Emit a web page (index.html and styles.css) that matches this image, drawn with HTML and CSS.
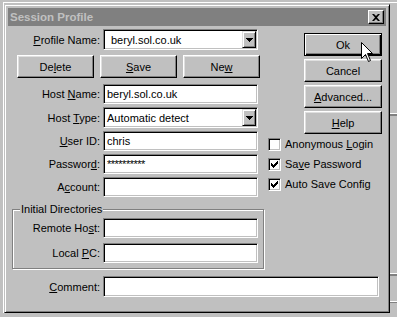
FILE: index.html
```html
<!DOCTYPE html>
<html lang="en">
<head>
    <meta charset="UTF-8">
    <title>Session Profile</title>
    <link rel="stylesheet" href="styles.css">
</head>
<body>
<div class="desk">
    <div class="dialog">
        <div class="titlebar">
            <span class="title">Session Profile</span>
            <button class="close">
                <svg width="8" height="7" viewBox="0 0 8 7"><path d="M0 0h2l2 2 2-2h2L5 3.5 8 7H6L4 5 2 7H0l3-3.5z"/></svg>
            </button>
        </div>
        <div class="content">
            <div class="upper">
                <div class="left">
                    <div class="row-grid">
                        <label class="lbl"><u>P</u>rofile Name:</label>
                        <div class="combo">
                            <span class="val val-profile">beryl.sol.co.uk</span>
                            <span class="drop"><svg width="7" height="4" viewBox="0 0 7 4"><path d="M0 0h7v1H6v1H5v1H4v1H3V3H2V2H1V1H0z"/></svg></span>
                        </div>
                    </div>
                    <div class="actions">
                        <button class="btn">De<u>l</u>ete</button>
                        <button class="btn"><u>S</u>ave</button>
                        <button class="btn">Ne<u>w</u></button>
                    </div>
                    <div class="row-grid fields">
                        <label class="lbl">Host <u>N</u>ame:</label>
                        <div class="edit">beryl.sol.co.uk</div>
                        <label class="lbl">Host <u>T</u>ype:</label>
                        <div class="combo">
                            <span class="val">Automatic detect</span>
                            <span class="drop"><svg width="7" height="4" viewBox="0 0 7 4"><path d="M0 0h7v1H6v1H5v1H4v1H3V3H2V2H1V1H0z"/></svg></span>
                        </div>
                        <label class="lbl"><u>U</u>ser ID:</label>
                        <div class="edit">chris</div>
                        <label class="lbl">Passwor<u>d</u>:</label>
                        <div class="edit pwd">**********</div>
                        <label class="lbl">A<u>c</u>count:</label>
                        <div class="edit"></div>
                    </div>
                    <fieldset class="group">
                        <legend>Initial Directories</legend>
                        <div class="row-grid group-grid">
                            <label class="lbl">Remote Ho<u>s</u>t:</label>
                            <div class="edit"></div>
                            <label class="lbl">Local <u>P</u>C:</label>
                            <div class="edit"></div>
                        </div>
                    </fieldset>
                </div>
                <div class="right">
                    <div class="side-btns">
                        <button class="btn btn-default">Ok</button>
                        <button class="btn">Cancel</button>
                        <button class="btn"><u>A</u>dvanced...</button>
                        <button class="btn"><u>H</u>elp</button>
                    </div>
                    <div class="checks">
                        <div class="check-row">
                            <span class="box"></span>
                            <span>Anonymous <u>L</u>ogin</span>
                        </div>
                        <div class="check-row">
                            <span class="box"><svg width="7" height="7" viewBox="0 0 7 7"><path d="M6 0h1v1H6zM5 1h2v1H5zM0 2h1v1H0zM4 2h3v1H4zM0 3h2v1H0zM3 3h3v1H3zM0 4h5v1H0zM1 5h3v1H1zM2 6h1v1H2z"/></svg></span>
                            <span>Sa<u>v</u>e Password</span>
                        </div>
                        <div class="check-row">
                            <span class="box"><svg width="7" height="7" viewBox="0 0 7 7"><path d="M6 0h1v1H6zM5 1h2v1H5zM0 2h1v1H0zM4 2h3v1H4zM0 3h2v1H0zM3 3h3v1H3zM0 4h5v1H0zM1 5h3v1H1zM2 6h1v1H2z"/></svg></span>
                            <span>Auto Save Config</span>
                        </div>
                    </div>
                </div>
            </div>
            <div class="comment-row">
                <label class="lbl"><u>C</u>omment:</label>
                <div class="edit"></div>
            </div>
        </div>
    </div>
    <div class="side"></div>
</div>
<svg class="cursor" width="13" height="20" viewBox="0 0 13 20">
    <path d="M0.5 0.5V16.5L4.5 12.5L7.5 19.5L9.5 18.5L6.5 11.5H11.5Z" fill="#fff" stroke="#000" stroke-width="1"/>
</svg>
</body>
</html>
```

FILE: styles.css
```css
body {
    margin: 0;
    background-color: #c0c0c0;
    font-family: "Liberation Sans", Arial, sans-serif;
    font-size: 11px;
    color: #000;
    overflow: hidden;
}

u {
    text-underline-offset: 1px;
}

button {
    font: inherit;
    color: inherit;
    padding: 0;
    margin: 0;
}

.desk {
    display: flex;
    margin: 2px 0 0 3px;
    padding-top: 1px;
    border-top: 1px solid #fff;
    border-left: 1px solid #fff;
}

.dialog {
    width: 386px;
    height: 309px;
    box-sizing: border-box;
    padding: 3px;
    border: 1px solid;
    border-color: #c0c0c0 #000 #000 #c0c0c0;
    box-shadow: inset 1px 1px #fff, inset -1px -1px #808080;
    display: flex;
    flex-direction: column;
}

.side {
    flex: 1;
    height: 309px;
    background: linear-gradient(to bottom,
        transparent 109px, #fff 109px 110px, #808080 110px 112px,
        transparent 112px 269px, #fff 269px 270px, #808080 270px 272px,
        transparent 272px 297px, #fff 297px 298px, #808080 298px 299px,
        transparent 299px);
}

/* title bar (inactive) */
.titlebar {
    height: 18px;
    background-color: #808080;
    display: flex;
    align-items: center;
    justify-content: space-between;
    padding: 0 2px;
}

.title {
    color: #c0c0c0;
    font-weight: bold;
    font-size: 11.5px;
}

.close {
    width: 16px;
    height: 14px;
    box-sizing: border-box;
    background-color: #c0c0c0;
    border: 1px solid;
    border-color: #fff #000 #000 #fff;
    box-shadow: inset -1px -1px #808080;
    display: flex;
    align-items: center;
    justify-content: center;
}

.content {
    padding-top: 3px;
}

.upper {
    display: flex;
}

.left {
    width: 256px;
}

.row-grid {
    display: grid;
    grid-template-columns: 92px 155px;
    column-gap: 3px;
    align-items: center;
}

.lbl {
    text-align: right;
    white-space: nowrap;
}

/* sunken fields */
.edit,
.combo {
    height: 20px;
    box-sizing: border-box;
    background-color: #fff;
    border: 1px solid;
    border-color: #808080 #fff #fff #808080;
    box-shadow: inset 1px 1px #000, inset -1px -1px #c0c0c0;
    display: flex;
    align-items: center;
    padding-left: 3px;
    white-space: nowrap;
    overflow: hidden;
}

.combo {
    height: 21px;
    padding: 1px;
}

.val {
    flex: 1;
    padding-left: 2px;
}

.val-profile {
    padding-left: 6px;
}

.drop {
    width: 14px;
    height: 17px;
    box-sizing: border-box;
    background-color: #c0c0c0;
    border: 1px solid;
    border-color: #dfdfdf #000 #000 #dfdfdf;
    box-shadow: inset 1px 1px #fff, inset -1px -1px #808080;
    display: flex;
    align-items: center;
    justify-content: center;
}

.pwd {
    letter-spacing: -0.5px;
    align-items: flex-start;
    padding-top: 3px;
}

/* raised buttons */
.btn {
    height: 23px;
    box-sizing: border-box;
    background-color: #c0c0c0;
    border: 1px solid;
    border-color: #fff #000 #000 #fff;
    box-shadow: inset -1px -1px #808080, inset 1px 1px #dfdfdf;
    text-align: center;
}

.btn-default {
    border-color: #000;
    box-shadow: inset 1px 1px #fff, inset -1px -1px #000, inset -2px -2px #808080;
}

.actions {
    display: grid;
    grid-template-columns: repeat(3, 77px);
    column-gap: 6px;
    margin: 5px 0 0 9px;
}

.fields {
    margin-top: 6px;
    row-gap: 3px;
}

.group {
    margin: 6px 0 0 4px;
    padding: 2px 5px 5px 0;
    min-width: 0;
    border: 1px solid #808080;
    box-shadow: inset 1px 1px #fff, 1px 1px #fff;
}

.group legend {
    margin-left: 7px;
    padding: 0 1px;
    line-height: 13px;
    background-color: #c0c0c0;
}

.group-grid {
    grid-template-columns: 87px 155px;
    row-gap: 5px;
}

.right {
    margin-left: 4px;
    display: flex;
    flex-direction: column;
}

.side-btns {
    width: 78px;
    display: flex;
    flex-direction: column;
    gap: 3px;
    margin: 4px 0 0 36px;
}

.check-row {
    height: 20px;
    display: flex;
    align-items: center;
    gap: 4px;
    white-space: nowrap;
}

.box {
    width: 13px;
    height: 13px;
    box-sizing: border-box;
    background-color: #fff;
    border: 1px solid;
    border-color: #808080 #fff #fff #808080;
    box-shadow: inset 1px 1px #000, inset -1px -1px #c0c0c0;
    display: flex;
    align-items: center;
    justify-content: center;
}

.comment-row {
    display: grid;
    grid-template-columns: 92px 276px;
    column-gap: 3px;
    align-items: center;
    margin-top: 7px;
}

.comment-row .edit {
    height: 21px;
}

.cursor {
    position: absolute;
    left: 361px;
    top: 42px;
}
```
